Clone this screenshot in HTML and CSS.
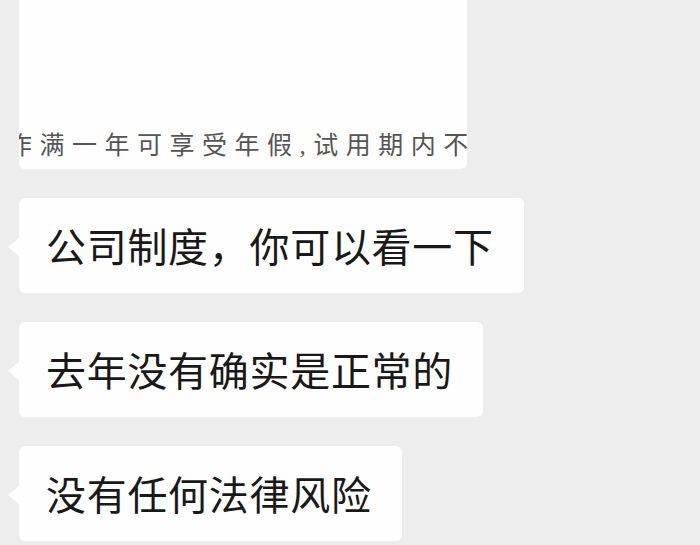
FILE: index.html
```html
<!DOCTYPE html>
<html lang="zh-CN">
<head>
  <meta charset="UTF-8" />
  <title>聊天记录</title>
  <link rel="stylesheet" href="styles.css">
</head>
<body>

  <!-- CHAT -->
  <div class="chat">
    <div class="doc-card">
      <div class="doc-text">作满一年可享受年假,试用期内不得</div>
    </div>
    <div class="bubble">公司制度，你可以看一下</div>
    <div class="bubble">去年没有确实是正常的</div>
    <div class="bubble">没有任何法律风险</div>
  </div>

</body>
</html>
```

FILE: styles.css
```css
* {
  box-sizing: border-box;
}
body {
  margin: 0;
  padding: 0;
  background: #ededed;
  font-family: "Noto Sans CJK SC", "Noto Sans", sans-serif;
  color: #191919;
  overflow: hidden;
}

.chat {
  display: flex;
  flex-direction: column;
  align-items: flex-start;
  gap: 29px;
  padding-left: 19px;
}

/* quoted document screenshot */
.doc-card {
  width: 448px;
  height: 169px;
  background: #fefefe;
  border-radius: 0 0 6px 6px;
  overflow: hidden;
  display: flex;
  flex-direction: column;
  justify-content: flex-end;
  padding-bottom: 8px;
}

.doc-text {
  font-family: "Liberation Serif", "Noto Sans CJK SC", serif;
  font-size: 25px;
  font-weight: 400;
  line-height: 30px;
  letter-spacing: 7.5px;
  color: #555;
  white-space: nowrap;
  text-indent: -12px;
}

/* message bubble */
.bubble {
  position: relative;
  background: #fefefe;
  border-radius: 6px;
  padding: 21px 30px 21px 27px;
  font-size: 40px;
  line-height: 53px;
  letter-spacing: 0.7px;
  white-space: nowrap;
}

.bubble::before {
  content: "";
  position: absolute;
  left: -11px;
  top: 40px;
  border-style: solid;
  border-width: 9px 11px 9px 0;
  border-color: transparent #fefefe transparent transparent;
}
```
